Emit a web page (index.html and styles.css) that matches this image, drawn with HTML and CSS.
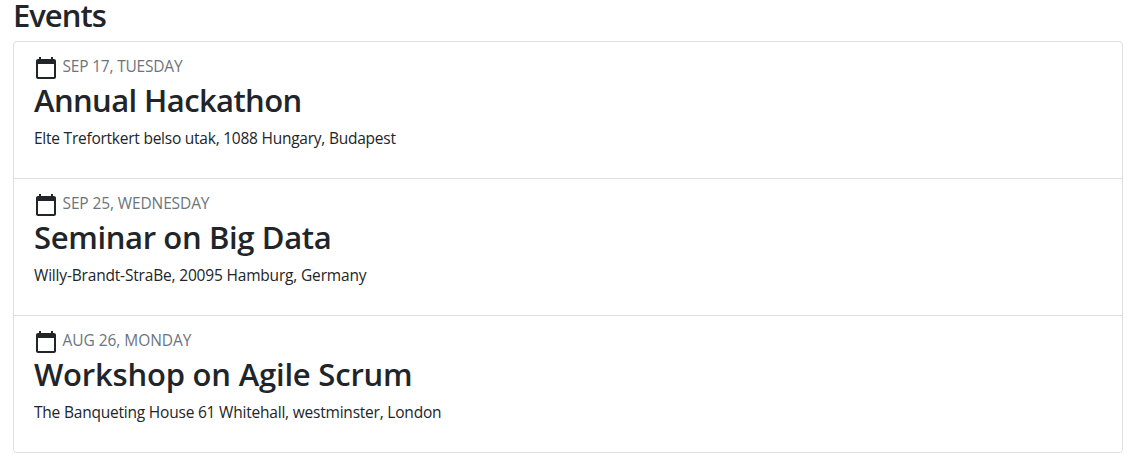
FILE: index.html
```html
<!DOCTYPE html>
<html lang="en">
<head>
<meta charset="utf-8">
<title>Events</title>
<link rel="stylesheet" href="styles.css">
</head>
<body>
<svg class="sprite" aria-hidden="true">
  <symbol id="calendar" viewBox="0 0 24 24"><path d="M20 3h-1V1h-2v2H7V1H5v2H4c-1.100 0-2 .9-2 2v16c0 1.100.9 2 2 2h16c1.100 0 2-.9 2-2V5c0-1.100-.9-2-2-2zm0 18H4V8h16v13z"/></symbol>
</svg>
<main class="events">
  <h1 class="page-title">Events</h1>
  <ul class="event-list">
    <li class="event hackathon">
      <div class="event-date"><svg class="icon"><use href="#calendar"/></svg><span class="date-text">SEP 17, TUESDAY</span></div>
      <h2 class="event-title">Annual Hackathon</h2>
      <p class="event-place">Elte Trefortkert belso utak, 1088 Hungary, Budapest</p>
    </li>
    <li class="event seminar">
      <div class="event-date"><svg class="icon"><use href="#calendar"/></svg><span class="date-text">SEP 25, WEDNESDAY</span></div>
      <h2 class="event-title">Seminar on Big Data</h2>
      <p class="event-place">Willy-Brandt-StraBe, 20095 Hamburg, Germany</p>
    </li>
    <li class="event workshop">
      <div class="event-date"><svg class="icon"><use href="#calendar"/></svg><span class="date-text">AUG 26, MONDAY</span></div>
      <h2 class="event-title">Workshop on Agile Scrum</h2>
      <p class="event-place">The Banqueting House 61 Whitehall, westminster, London</p>
    </li>
  </ul>
</main>
</body>
</html>
```

FILE: styles.css
```css
* { box-sizing: border-box; }
body { margin: 0; background: #fff; color: #212529; font-family: "Segoe UI", "Open Sans", "Noto Sans", sans-serif; font-size: 15.5px; line-height: 24px; }
.sprite { display: none; }
.events { padding: 0 4px 0 13px; }
.page-title, .event-title { margin: 0; font-size: 31px; line-height: 38px; font-weight: 600; white-space: nowrap; }
.page-title { height: 41px; line-height: 31px; letter-spacing: -1px; }
.event-list { list-style: none; margin: 0; padding: 0; width: 1110px; border: 1px solid #dfdfdf; border-radius: 4px; }
.event { height: 137px; padding: 13px 20px 0; border-bottom: 1px solid #dfdfdf; }
.event:last-child { height: 136px; border-bottom: 0; }
.event-date { display: flex; align-items: center; height: 26px; gap: 4.5px; color: #6c757d; letter-spacing: -0.2px; }
.icon { width: 24px; height: 24px; fill: #212529; }
.date-text { margin-top: -4px; }
.event-title { height: 38px; letter-spacing: -0.6px; }
.event-place { margin: 7px 0 0; line-height: 24px; white-space: nowrap; letter-spacing: -0.24px; }
.seminar .event-title { letter-spacing: -0.36px; }
.workshop .event-title { letter-spacing: -0.2px; }
.seminar .event-date { letter-spacing: -0.12px; }
.workshop .event-date { letter-spacing: -0.05px; }
.seminar .event-place { letter-spacing: -0.18px; }
.workshop .event-place { letter-spacing: -0.21px; }
```
